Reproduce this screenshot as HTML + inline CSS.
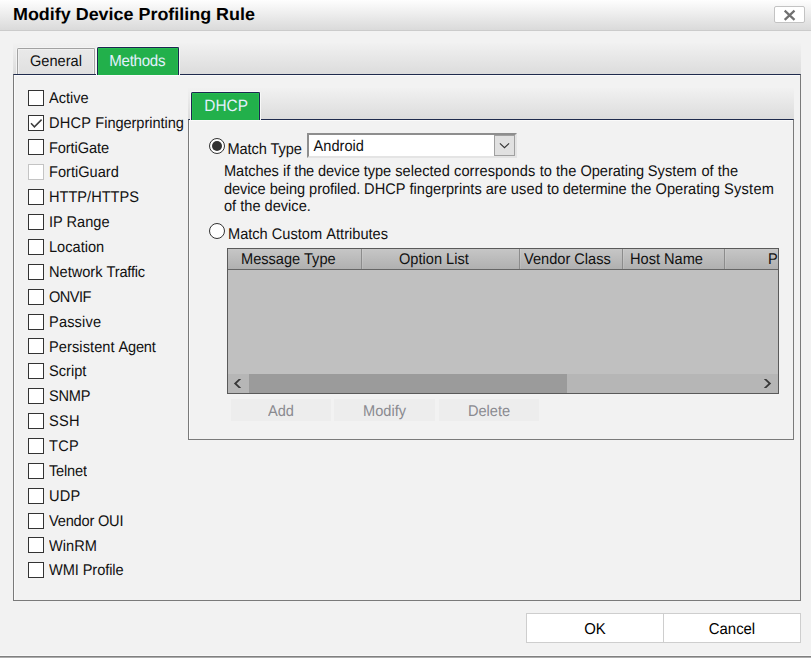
<!DOCTYPE html>
<html>
<head>
<meta charset="utf-8">
<title>Modify Device Profiling Rule</title>
<style>
html,body{margin:0;padding:0;}
body{font-variant-ligatures:none;width:811px;height:658px;overflow:hidden;background:#f2f2f2;font-family:"Liberation Sans",sans-serif;font-size:14.6px;color:#111;position:relative;}
.abs{position:absolute;}
svg{position:absolute;left:0;top:0;display:block;}
.t{position:absolute;white-space:nowrap;line-height:18px;height:18px;text-rendering:geometricPrecision;transform-origin:0 14.1px;transform:scaleY(1.06);margin-top:1px;}
#titlebar{left:0;top:0;width:811px;height:30px;background:linear-gradient(#fefefe,#dadada);border-bottom:1px solid #cbcbcb;}
#title{left:13px;top:4.4px;font-weight:bold;font-size:17px;color:#000;line-height:20px;height:20px;transform-origin:0 0;transform:scale(1.054,1.02);}
#close{left:774px;top:6px;width:29px;height:15px;background:#fff;border:1px solid #c3c3c3;border-radius:2px;}
#strip1{left:13px;top:43px;width:788px;height:31px;background:linear-gradient(#f1f1f1,#dcdcdc);}
#panel1{left:13px;top:74px;width:786px;height:525px;border:1px solid #7a7a7a;border-top:1px solid #1f2b4d;background:#f2f2f2;box-shadow:inset 1px 1px 0 #fafafa;}
.tab{position:absolute;box-sizing:border-box;}
#tabGeneral{left:17px;top:48px;width:78px;height:26px;border:1px solid #a2a2a2;border-bottom:none;border-radius:1.5px 1.5px 0 0;background:linear-gradient(#e9e9e9,#e0e0e0);box-shadow:1px 0 0 #f4f4f4,-1px 0 0 #f4f4f4,0 -1px 0 #f4f4f4,inset 1px 1px 0 #f0f0f0,inset -1px 0 0 #f0f0f0;}
#tabMethods{left:97px;top:47px;width:82px;height:28px;border:1px solid #1c2750;border-bottom:none;border-radius:1.5px 1.5px 0 0;background:#22b04b;box-shadow:1px 0 0 #f8f8f8,-1px 0 0 #f8f8f8,0 -1px 0 #f8f8f8,inset 1px 1px 0 #24bd4f,inset -1px 0 0 #24bd4f;}
#strip2{left:188px;top:88px;width:606px;height:31px;background:linear-gradient(#f1f1f1,#dcdcdc);}
#panel2{left:188px;top:119px;width:604px;height:319px;border:1px solid #7a7a7a;border-top:1px solid #1f2b4d;background:#f2f2f2;box-shadow:inset 1px 1px 0 #fafafa;}
#tabDHCP{left:191px;top:92px;width:69px;height:28px;border:1px solid #1c2750;border-bottom:none;border-radius:1.5px 1.5px 0 0;background:#22b04b;box-shadow:1px 0 0 #f8f8f8,-1px 0 0 #f8f8f8,0 -1px 0 #f8f8f8,inset 1px 1px 0 #24bd4f,inset -1px 0 0 #24bd4f;}
.cb{position:absolute;left:28px;width:14px;height:14px;border:1px solid #333;background:#fff;}
.cb.dis{border-color:#c4c4c4;}
.lbl{left:49px;font-size:14.6px;}
.radio{position:absolute;width:14px;height:14px;border:1px solid #333;border-radius:50%;background:#fff;}
#select{left:307px;top:133px;width:210px;height:25px;border:2px solid #e4e4e4;border-top:2px solid #8e8e8e;border-left:2px solid #8e8e8e;background:#fff;box-sizing:border-box;}
#selbtn{left:494px;top:135px;width:21px;height:21px;background:#e1e1e1;border:1px solid #a0a0a0;box-sizing:border-box;}
#table{left:227px;top:248px;width:550px;height:144px;border:1px solid #5a5a5a;background:#c0c0c0;}
#thead{left:0;top:0;width:550px;height:20px;background:linear-gradient(#c6c6c6,#b0b0b0);border-bottom:1px solid #666;}
.vd{position:absolute;top:0;width:1px;height:20px;background:#8c8c8c;box-shadow:1px 0 0 rgba(255,255,255,0.12);}
#sbar{left:0;top:125px;width:550px;height:19px;background:#b6b6b6;}
#sleft{left:0;top:0;width:21px;height:19px;}
#thumb{left:21px;top:0;width:318px;height:19px;background:#9b9b9b;}
.btn{position:absolute;top:399px;height:22px;background:#ededed;color:#8a8a90;text-align:center;line-height:25.4px;}
.bbtn{position:absolute;top:613px;height:28px;background:#fff;border:1px solid #cecece;text-align:center;line-height:30px;color:#000;font-size:15.1px;}
.bl{text-align:center;color:#8a8a90;}
.bb{text-align:center;color:#000;font-size:14.9px;}
#bottomline{left:0;top:655px;width:811px;height:1px;background:#f9f9f9;border-bottom:1px solid #808080;}
#bottomline2{left:0;top:657px;width:811px;height:1px;background:#adadad;}
</style>
</head>
<body>
<div id="titlebar" class="abs"></div>
<div id="title" class="t">Modify Device Profiling Rule</div>
<div id="close" class="abs"><svg width="29" height="15" viewBox="0 0 29 15"><path d="M9.7 3.6 L19.5 12.9 M19.5 3.6 L9.7 12.9" stroke="#707070" stroke-width="2.2" fill="none"/></svg></div>

<div id="strip1" class="abs"></div>
<div id="panel1" class="abs"></div>
<div id="tabGeneral" class="tab"></div>
<div id="tabMethods" class="tab"></div>
<div class="t" style="left:30px;top:52px;">General</div>
<div class="t" style="left:109.3px;top:52px;color:#e4f0ff;font-size:15.1px;letter-spacing:-0.28px;">Methods</div>

<div id="strip2" class="abs"></div>
<div id="panel2" class="abs"></div>
<div id="tabDHCP" class="tab"></div>
<div class="t" style="left:204.3px;top:96.5px;color:#e4f0ff;font-size:15.4px;">DHCP</div>

<div class="cb" style="top:90.00px;"></div><div class="t lbl" style="top:89.00px;">Active</div>
<div class="cb" style="top:115.00px;"><svg width="14" height="14" viewBox="0 0 14 14"><path d="M2 7.2 L5.4 10.8 L12.6 3.6" stroke="#3c3c3c" stroke-width="1.5" fill="none"/></svg></div><div class="t lbl" style="top:114.00px;"><span style="letter-spacing:0.25px">DHCP</span><span style="letter-spacing:-0.06px"> Fingerprinting</span></div>
<div class="cb" style="top:139.00px;"></div><div class="t lbl" style="top:138.80px;letter-spacing:-0.10px;">FortiGate</div>
<div class="cb dis" style="top:164.00px;"></div><div class="t lbl" style="top:163.00px;">FortiGuard</div>
<div class="cb" style="top:189.00px;"></div><div class="t lbl" style="top:188.00px;">HTTP/HTTPS</div>
<div class="cb" style="top:214.00px;"></div><div class="t lbl" style="top:213.00px;">IP Range</div>
<div class="cb" style="top:239.00px;"></div><div class="t lbl" style="top:238.00px;">Location</div>
<div class="cb" style="top:264.00px;"></div><div class="t lbl" style="top:263.00px;">Network <span style="letter-spacing:-0.2px">Traffic</span></div>
<div class="cb" style="top:289.00px;"></div><div class="t lbl" style="top:288.00px;letter-spacing:-0.55px;">ONVIF</div>
<div class="cb" style="top:314.00px;"></div><div class="t lbl" style="top:313.00px;letter-spacing:0.15px;">Passive</div>
<div class="cb" style="top:338.00px;"></div><div class="t lbl" style="top:337.50px;"><span style="letter-spacing:0.08px">Persistent</span><span style="margin-left:0.9px;letter-spacing:-0.24px"> Agent</span></div>
<div class="cb" style="top:363.00px;"></div><div class="t lbl" style="top:362.00px;">Script</div>
<div class="cb" style="top:388.00px;"></div><div class="t lbl" style="top:387.00px;letter-spacing:-0.25px;">SNMP</div>
<div class="cb" style="top:413.00px;"></div><div class="t lbl" style="top:412.00px;letter-spacing:0.30px;">SSH</div>
<div class="cb" style="top:438.00px;"></div><div class="t lbl" style="top:437.00px;letter-spacing:0.30px;">TCP</div>
<div class="cb" style="top:463.00px;"></div><div class="t lbl" style="top:462.00px;letter-spacing:-0.18px;">Telnet</div>
<div class="cb" style="top:488.00px;"></div><div class="t lbl" style="top:487.00px;letter-spacing:0.25px;">UDP</div>
<div class="cb" style="top:513.00px;"></div><div class="t lbl" style="top:512.00px;letter-spacing:-0.20px;">Vendor OUI</div>
<div class="cb" style="top:537.00px;"></div><div class="t lbl" style="top:536.90px;">WinRM</div>
<div class="cb" style="top:562.00px;"></div><div class="t lbl" style="top:561.00px;letter-spacing:-0.08px;">WMI Profile</div>

<div class="radio" style="left:209px;top:138px;"><div style="position:absolute;left:2px;top:2px;width:10px;height:10px;border-radius:50%;background:#333;"></div></div>
<div class="t" style="left:227.5px;top:139.7px;letter-spacing:-0.1px;">Match Type</div>
<div id="select" class="abs"></div>
<div id="selbtn" class="abs"><svg width="19" height="19" viewBox="0 0 19 19"><path d="M4.9 7.3 L9.5 11.7 L14.1 7.3" stroke="#333" stroke-width="1.1" fill="none"/></svg></div>
<div class="t" style="left:313.6px;top:136.6px;">Android</div>
<div class="t" style="left:224.00px;top:161.5px;letter-spacing:-0.042px;">Matches</div>
<div class="t" style="left:282.95px;top:161.5px;">if</div>
<div class="t" style="left:294.30px;top:161.5px;letter-spacing:-0.175px;">the</div>
<div class="t" style="left:318.00px;top:161.5px;letter-spacing:-0.080px;">device</div>
<div class="t" style="left:363.65px;top:161.5px;">type</div>
<div class="t" style="left:395.25px;top:161.5px;letter-spacing:0.029px;">selected</div>
<div class="t" style="left:454.00px;top:161.5px;letter-spacing:0.090px;">corresponds</div>
<div class="t" style="left:539.75px;top:161.5px;">to</div>
<div class="t" style="left:556.00px;top:161.5px;letter-spacing:0.025px;">the</div>
<div class="t" style="left:580.50px;top:161.5px;letter-spacing:-0.050px;">Operating</div>
<div class="t" style="left:647.85px;top:161.5px;letter-spacing:0.040px;">System</div>
<div class="t" style="left:701.45px;top:161.5px;">of</div>
<div class="t" style="left:717.80px;top:161.5px;">the</div>
<div class="t" style="left:224.00px;top:179.5px;letter-spacing:-0.120px;">device</div>
<div class="t" style="left:269.85px;top:179.5px;letter-spacing:-0.125px;">being</div>
<div class="t" style="left:309.10px;top:179.5px;letter-spacing:-0.075px;">profiled.</div>
<div class="t" style="left:364.10px;top:179.5px;letter-spacing:0.050px;">DHCP</div>
<div class="t" style="left:409.50px;top:179.5px;">fingerprints</div>
<div class="t" style="left:485.75px;top:179.5px;letter-spacing:-0.050px;">are</div>
<div class="t" style="left:510.80px;top:179.5px;letter-spacing:0.100px;">used</div>
<div class="t" style="left:547.10px;top:179.5px;letter-spacing:-0.200px;">to</div>
<div class="t" style="left:562.85px;top:179.5px;letter-spacing:-0.138px;">determine</div>
<div class="t" style="left:630.90px;top:179.5px;letter-spacing:0.050px;">the</div>
<div class="t" style="left:655.50px;top:179.5px;letter-spacing:0.025px;">Operating</div>
<div class="t" style="left:724.00px;top:179.5px;letter-spacing:0.250px;">System</div>
<div class="t" style="left:224px;top:197.2px;">of the device.</div>
<div class="radio" style="left:209px;top:223px;"></div>
<div class="t" style="left:228px;top:225px;">Match Custom<span style="margin-left:1px"> Attributes</span></div>

<div id="table" class="abs">
  <div id="thead" class="abs">
    <div class="vd" style="left:133px;"></div>
    <div class="vd" style="left:291px;"></div>
    <div class="vd" style="left:394px;"></div>
    <div class="vd" style="left:496px;"></div>
    <div class="t" style="left:13px;top:1px;">Message Type</div>
    <div class="t" style="left:171px;top:1px;">Option List</div>
    <div class="t" style="left:296px;top:1px;">Vendor Class</div>
    <div class="t" style="left:402px;top:1px;">Host Name</div>
    <div class="t" style="left:540px;top:1px;width:10px;overflow:hidden;">P</div>
  </div>
  <div id="sbar" class="abs">
    <div id="sleft" class="abs"><svg width="21" height="19" viewBox="0 0 21 19"><path d="M13.2 5 L10.7 5 L5.9 9.5 L10.7 14 L13.2 14 L8.6 9.5 Z" fill="#383838"/></svg></div>
    <div id="thumb" class="abs"></div>
    <svg style="left:529px;top:0" width="21" height="19" viewBox="0 0 21 19"><path d="M6.8 5 L9.3 5 L14.2 9.5 L9.3 14 L6.8 14 L11.5 9.5 Z" fill="#383838"/></svg>
  </div>
</div>

<div class="btn" style="left:231px;width:100px;"></div>
<div class="btn" style="left:334px;width:101px;"></div>
<div class="btn" style="left:439px;width:100px;"></div>
<div class="t bl" style="left:231px;width:100px;top:402px;">Add</div>
<div class="t bl" style="left:334px;width:101px;top:402px;">Modify</div>
<div class="t bl" style="left:439px;width:100px;top:402px;">Delete</div>

<div class="bbtn" style="left:526px;width:136px;"></div>
<div class="bbtn" style="left:663px;width:136px;"></div>
<div class="t bb" style="left:527px;width:136px;top:619.8px;">OK</div>
<div class="t bb" style="left:664px;width:136px;top:619.8px;">Cancel</div>
<div id="bottomline" class="abs"></div>
<div id="bottomline2" class="abs"></div>
</body>
</html>
